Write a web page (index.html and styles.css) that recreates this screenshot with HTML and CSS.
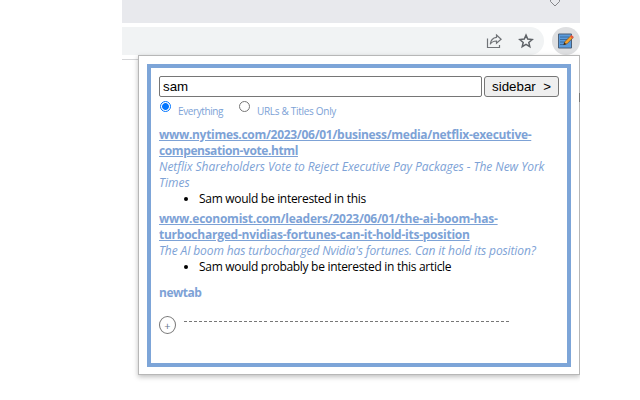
FILE: index.html
```
<!DOCTYPE html>
<html lang="en">
<head>
<meta charset="utf-8">
<title>Notes popup</title>
<link rel="stylesheet" href="styles.css">
</head>
<body>
<div class="browser">
  <div class="tabstrip">
    <svg class="chevron" width="14" height="8" viewBox="0 0 14 8"><path d="M2.500 0v1.500l4.500 4.500 4.500-4.500V0" fill="none" stroke="#85868a" stroke-width="1"/></svg>
  </div>
  <div class="toolbar">
    <div class="omnibox">
      <svg width="16" height="16" viewBox="0 0 16 16" fill="none" stroke="#707377" stroke-width="1.2"><path d="M1.500 5.500v9h12V12M10.500 2l4.600 4.200-4.600 4V8C7.300 8 5.500 9 4.300 11.200 4.700 7.200 7 4.700 10.500 4.300Z"/></svg>
      <svg width="16" height="16" viewBox="0 0 16 16" fill="none" stroke="#5f6368" stroke-width="1.5"><path d="M8 2.100l1.700 4 4.500.4-3.400 2.900 1 4.300L8 11.400l-3.800 2.300 1-4.300-3.400-2.900 4.500-.4Z"/></svg>
    </div>
    <div class="extension">
      <svg width="18" height="18" viewBox="0 0 18 18"><path d="M1.500 2h13v14h-13z" fill="#5b9bdc" stroke="#4a5f78"/><path d="M3 5h9M3 7.500h8M3 10h6M3 12.500h6" stroke="#3b6c9e"/><path d="M6.800 12.700l1-3L14 3.600l2.200 2L10 11.800Z" fill="#f5a12c" stroke="#65411f" stroke-width=".6"/><path d="M13 4.500l1.500-1.500 2.300 2-1.600 1.600Z" fill="#e9573d"/><path d="M6.500 13l1-2.400 1.500 1.300Z" fill="#222"/></svg>
    </div>
  </div>
  <div class="page-edge"></div>
  <div class="popup">
    <div class="panel">
      <div class="search">
        <input class="query" type="text" value="sam">
        <button class="sidebar" type="button">sidebar&nbsp; &gt;</button>
      </div>
      <div class="scope">
        <i class="radio on"></i><span class="everything">Everything</span>
        <i class="radio"></i><span class="urls">URLs &amp; Titles Only</span>
      </div>
      <div class="entry">
        <a class="link"><span class="w1">www.nytimes.com/2023/06/01/business/media/netflix-executive-</span><br><span class="w2">compensation-vote.html</span></a>
        <div class="title"><span class="t1">Netflix Shareholders Vote to Reject Executive Pay Packages - The New York</span><br>Times</div>
        <ul><li>Sam would be interested in this</li></ul>
      </div>
      <div class="entry">
        <a class="link"><span class="w3">www.economist.com/leaders/2023/06/01/the-ai-boom-has-</span><br><span class="w3">turbocharged-nvidias-fortunes-can-it-hold-its-position</span></a>
        <div class="title t2">The AI boom has turbocharged Nvidia's fortunes. Can it hold its position?</div>
        <ul><li>Sam would probably be interested in this article</li></ul>
      </div>
      <div class="newtab">newtab</div>
      <div class="add"><span class="plus">+</span><span class="dashes"></span></div>
    </div>
  </div>
</div>
</body>
</html>
```
FILE: styles.css
```
* { box-sizing: border-box; }
body { margin: 0; background: #fff; font: 12px/16px "Open Sans", "Noto Sans", sans-serif; }
.browser { position: relative; width: 458px; height: 400px; margin-left: 122px; overflow: hidden; }
.tabstrip { height: 23px; background: #e8e9ed; padding-left: 426px; }
.chevron { display: block; }
.toolbar { display: flex; height: 37px; padding-top: 4px; border-bottom: 1px solid #d5d6d8; }
.omnibox { display: flex; gap: 16px; justify-content: flex-end; width: 422px; height: 28px; padding: 6px 10px 0 0; background: #f1f3f4; border-radius: 0 14px 14px 0; }
.extension { flex: none; width: 28px; height: 28px; margin-left: 8px; padding: 5px; border-radius: 50%; background: #dedfe1; }
.extension svg { display: block; }
.page-edge { position: absolute; right: 0; top: 93px; z-index: 1; width: 1px; height: 9px; background: #777; }
.popup { position: absolute; left: 16px; top: 55px; width: 442px; height: 320px; padding: 8px; border: 1px solid #b7b7b7; background: #fff; box-shadow: 0 2px 5px rgba(0,0,0,.25); }
.panel { width: 424px; height: 303px; padding: 8px; border: 4px solid #7da5d8; }
.search { display: flex; gap: 2px; }
.query { width: 323px; height: 21px; padding: 1px 3px; border: 1px solid #767676; border-radius: 2px; background: #fff; color: #000; font: 13.333px "Liberation Sans", sans-serif; }
.sidebar { width: 75px; height: 21px; padding: 0; border: 1px solid #767676; border-radius: 3px; background: #efefef; color: #000; font: 13.333px "Liberation Sans", sans-serif; white-space: nowrap; }
.scope { display: flex; height: 30px; padding-top: 4px; color: #7da2d6; font-size: 10px; line-height: 20px; white-space: nowrap; }
.radio { flex: none; width: 11px; height: 11px; margin-left: 1px; border: 1px solid #767676; border-radius: 50%; }
.radio.on { border-color: #0075ff; background: radial-gradient(circle, #0075ff 3px, #fff 3.800px); }
.everything { width: 60px; margin-left: 7px; letter-spacing: -.4px; }
.urls { margin-left: 7px; letter-spacing: -.3px; }
.entry { margin-bottom: 4px; white-space: nowrap; }
.link { display: block; color: #7da2d6; font-weight: 700; text-decoration: underline; }
.title { color: #7da2d6; font-style: italic; }
.w1 { letter-spacing: -.3px; }
.w2 { letter-spacing: -.4px; }
.w3 { letter-spacing: -.24px; }
.t1 { letter-spacing: -.055px; }
.t2 { letter-spacing: -.115px; }
ul { margin: 0; padding-left: 40px; color: #000; letter-spacing: -.3px; }
.newtab { padding-top: 6px; color: #7da2d6; font-weight: 700; letter-spacing: -.5px; }
.add { display: flex; gap: 8px; margin-top: 15px; }
.plus { width: 17px; height: 18px; border: 1px solid #777; border-radius: 50%; color: #66788e; font-size: 11px; line-height: 18px; text-align: center; }
.dashes { width: 325px; height: 1px; margin-top: 5px; background: repeating-linear-gradient(90deg, #777 0 3px, transparent 3px 5.031px); }
```
